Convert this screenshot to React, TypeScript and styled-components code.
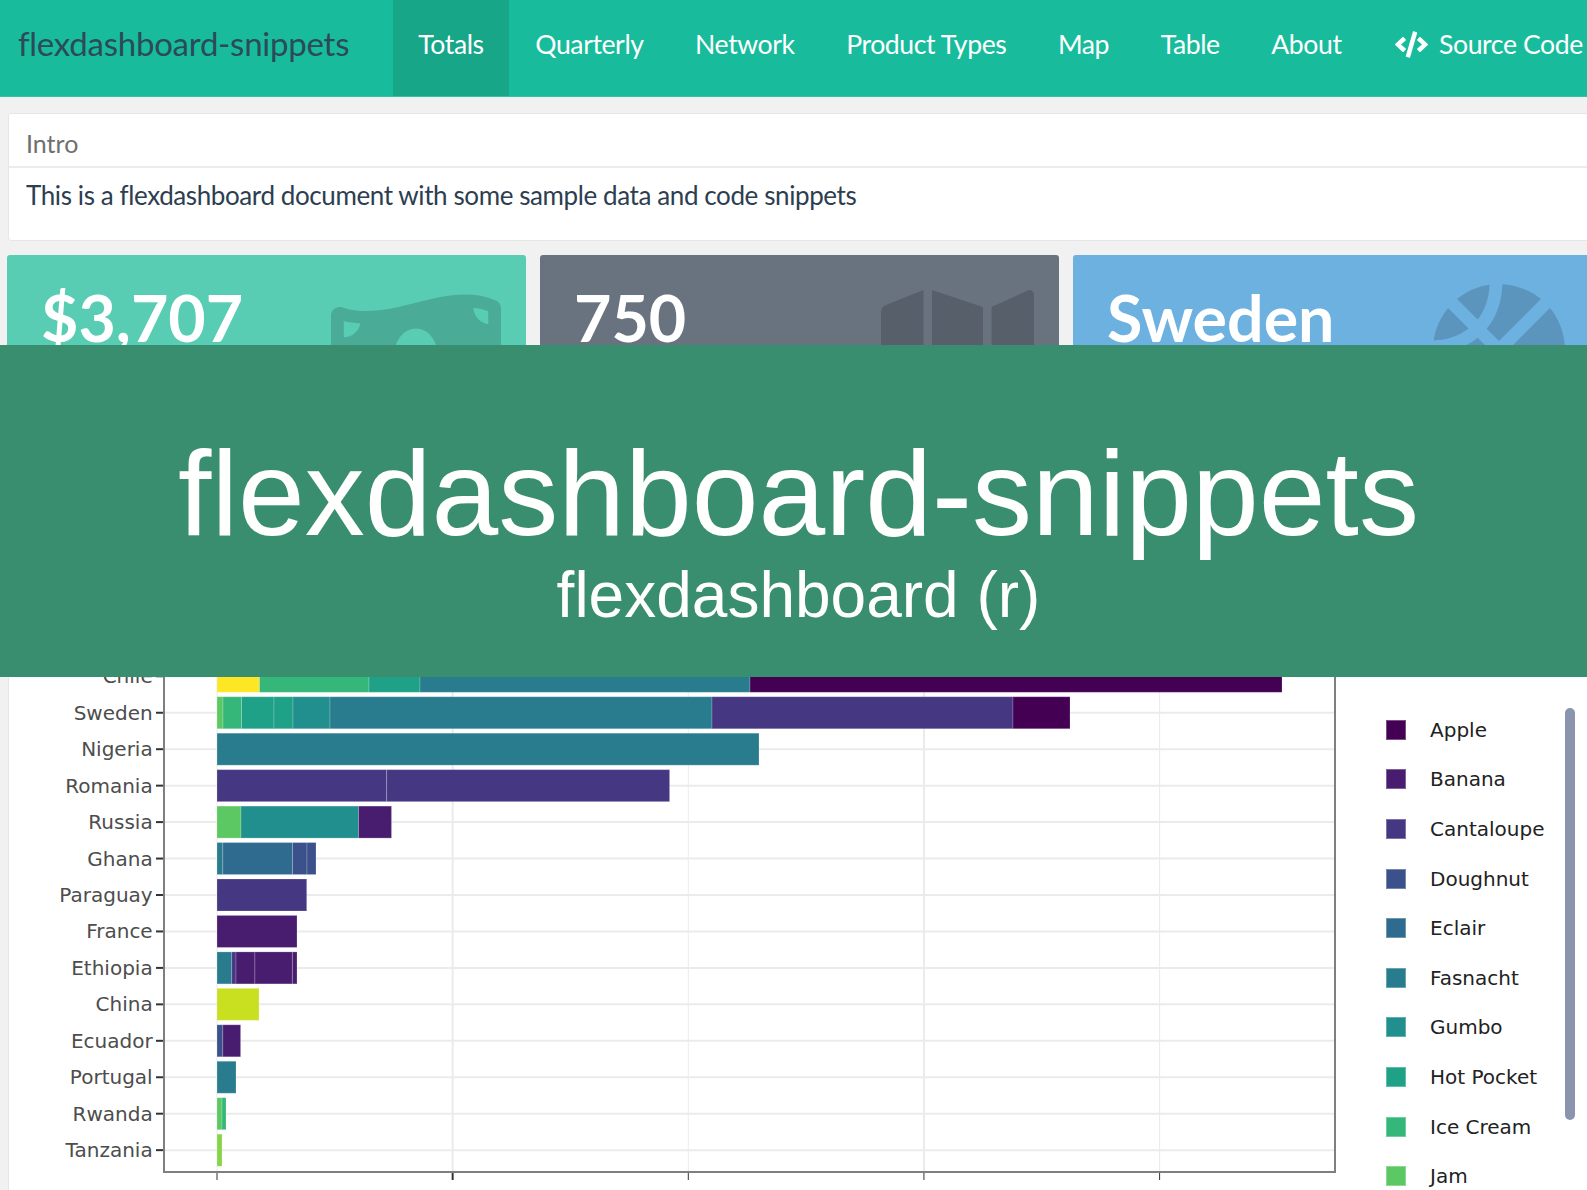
import React from 'react';
import styled, { createGlobalStyle } from 'styled-components';
import { FaBasketballBall, FaCode, FaMap, FaMoneyBillWave } from 'react-icons/fa';

const GlobalStyle = createGlobalStyle`
  html, body {
    margin: 0;
    padding: 0;
    background: #f1f1f1;
  }
  body {
    font-family: 'Lato', sans-serif;
  }
`;

const Page = styled.div`
  position: relative;
  width: 1587px;
  height: 1190px;
  overflow: hidden;
`;

const Navbar = styled.nav`
  display: flex;
  align-items: stretch;
  width: 1640px;
  height: 97px;
  box-sizing: border-box;
  background: #18bc9c;
  border-bottom: 1px solid #2ec4a6;
`;

const Brand = styled.div`
  flex: none;
  display: flex;
  align-items: center;
  width: 393px;
  box-sizing: border-box;
  padding: 0 0 10px 18px;
  font-size: 33px;
  letter-spacing: -0.25px;
  color: #2c4a58;
  white-space: nowrap;
`;

const NavItem = styled.a<{ $active?: boolean }>`
  flex: none;
  display: flex;
  align-items: center;
  gap: 11px;
  padding: 0 25.25px 8px;
  margin-right: 1px;
  font-size: 26.6px;
  letter-spacing: -0.4px;
  color: #fff;
  white-space: nowrap;
  background: ${(p) => (p.$active ? '#17a688' : 'transparent')};
`;

const CodeIcon = styled(FaCode)`
  margin-left: 2px;
`;

const Main = styled.main`
  display: flex;
  flex-direction: column;
  width: 1610px;
  padding: 16px 0 0 7px;
  box-sizing: border-box;
`;

const IntroCard = styled.section`
  height: 128px;
  box-sizing: border-box;
  margin-left: 1px;
  background: #fff;
  border: 1px solid #e6e6e6;
  border-radius: 3px;
`;

const IntroTitle = styled.div`
  height: 54px;
  box-sizing: border-box;
  padding: 14px 0 0 17px;
  font-size: 25px;
  line-height: 30px;
  color: #6f6f6f;
  border-bottom: 2px solid #ececec;
`;

const IntroBody = styled.p`
  margin: 0;
  padding: 11px 0 0 17px;
  font-size: 26px;
  line-height: 32px;
  letter-spacing: -0.4px;
  color: #2c3e50;
`;

const ValueRow = styled.div`
  display: grid;
  grid-template-columns: repeat(3, 519px);
  gap: 14px;
  margin-top: 14px;
`;

const ValueBox = styled.div<{ $bg: string }>`
  position: relative;
  height: 190px;
  overflow: hidden;
  box-sizing: border-box;
  padding: 24px 0 0 34px;
  background: ${(p) => p.$bg};
  border-radius: 3px;
  font-size: 64.5px;
  line-height: 76px;
  font-weight: 700;
  color: #fff;
`;

const BoxIcon = styled.span<{ $top: number }>`
  position: absolute;
  top: ${(p) => p.$top}px;
  right: 25px;
  display: flex;
  color: rgba(0, 0, 0, 0.16);
`;

const ChartCard = styled.section`
  display: flex;
  margin: 15px 0 0 1px;
  height: 760px;
  background: #fff;
  border: 1px solid #e6e6e6;
  border-radius: 3px;
`;

const Plot = styled.svg`
  flex: none;
  width: 1350px;
  height: 760px;
  font-family: 'DejaVu Sans', sans-serif;
`;

const AxisLabel = styled.text`
  font-size: 20px;
  fill: #4d4d4d;
`;

const Legend = styled.ul`
  position: relative;
  list-style: none;
  margin: 0;
  padding: 244px 0 0 27px;
  font-family: 'DejaVu Sans', sans-serif;
`;

const LegendItem = styled.li`
  display: flex;
  align-items: center;
  gap: 24px;
  height: 49.6px;
  font-size: 20px;
  color: #222;
  white-space: nowrap;
`;

const Swatch = styled.span<{ $color: string }>`
  flex: none;
  width: 20px;
  height: 20px;
  box-sizing: border-box;
  background: ${(p) => p.$color};
  border: 1px solid rgba(255, 255, 255, 0.3);
`;

const LegendScroll = styled.div`
  position: absolute;
  top: 247px;
  left: 206px;
  width: 10px;
  height: 412px;
  border-radius: 5px;
  background: #8a94ad;
`;

const Banner = styled.div`
  position: absolute;
  top: 345px;
  left: 0;
  right: 0;
  height: 332px;
  padding: 40px 0 0 10px;
  box-sizing: border-box;
  display: flex;
  flex-direction: column;
  align-items: center;
  justify-content: center;
  background: #388e6e;
  color: #fff;
  font-family: 'Liberation Sans', Arial, sans-serif;
`;

const BannerTitle = styled.div`
  font-size: 120px;
  line-height: 124px;
`;

const BannerSub = styled.div`
  margin-top: 4px;
  font-size: 64px;
  line-height: 72px;
`;

const APPLE = '#440154';
const BANANA = '#481d6f';
const CANTALOUPE = '#453781';
const DOUGHNUT = '#3b518b';
const ECLAIR = '#2f6b8e';
const FASNACHT = '#287c8e';
const GUMBO = '#218f8d';
const HOT = '#1fa187';
const ICE = '#36b77a';
const JAM = '#5cc863';

const legend: [string, string][] = [
  ['Apple', APPLE],
  ['Banana', BANANA],
  ['Cantaloupe', CANTALOUPE],
  ['Doughnut', DOUGHNUT],
  ['Eclair', ECLAIR],
  ['Fasnacht', FASNACHT],
  ['Gumbo', GUMBO],
  ['Hot Pocket', HOT],
  ['Ice Cream', ICE],
  ['Jam', JAM],
];

// each segment: right edge in page px, colour
const rows: { name: string; segs: [number, string][] }[] = [
  { name: 'Chile', segs: [[259.5, '#fde725'], [369, ICE], [420, HOT], [750, FASNACHT], [1282, APPLE]] },
  { name: 'Sweden', segs: [[223, JAM], [241.5, ICE], [274, HOT], [293, HOT], [330, GUMBO], [712, FASNACHT], [1013, CANTALOUPE], [1070, APPLE]] },
  { name: 'Nigeria', segs: [[759, FASNACHT]] },
  { name: 'Romania', segs: [[386.6, CANTALOUPE], [669.6, CANTALOUPE]] },
  { name: 'Russia', segs: [[241, JAM], [358.5, GUMBO], [391.5, BANANA]] },
  { name: 'Ghana', segs: [[222.8, FASNACHT], [292.5, ECLAIR], [307, DOUGHNUT], [316, DOUGHNUT]] },
  { name: 'Paraguay', segs: [[306.7, CANTALOUPE]] },
  { name: 'France', segs: [[297, BANANA]] },
  { name: 'Ethiopia', segs: [[231.7, FASNACHT], [236, CANTALOUPE], [254.9, BANANA], [292.4, BANANA], [297, BANANA]] },
  { name: 'China', segs: [[259, '#c8e020']] },
  { name: 'Ecuador', segs: [[222.8, DOUGHNUT], [240.6, BANANA]] },
  { name: 'Portugal', segs: [[236, FASNACHT]] },
  { name: 'Rwanda', segs: [[222, JAM], [226, ICE]] },
  { name: 'Tanzania', segs: [[222, '#86d549']] },
];

const ROW0 = 676.3;
const ROW_STEP = 36.45;
const BAR_H = 32;
const X0 = 217;
const PX_PER_UNIT = 4.713;

const ticks = [0, 50, 100, 150, 200];

const Chart = () => (
  <Plot viewBox="9 461 1350 760">
    {ticks.map((t) => (
      <line
        key={t}
        x1={X0 + t * PX_PER_UNIT}
        x2={X0 + t * PX_PER_UNIT}
        y1={461}
        y2={1172}
        stroke="#ebebeb"
        strokeWidth={t === 50 || t === 150 ? 2 : 1}
      />
    ))}
    {rows.map((r, i) => {
      const y = ROW0 + i * ROW_STEP;
      let left = X0;
      return (
        <g key={r.name}>
          <line x1={164} x2={1335} y1={y} y2={y} stroke="#ebebeb" strokeWidth={2} />
          <line x1={156} x2={164} y1={y} y2={y} stroke="#333" strokeWidth={2} />
          <AxisLabel x={152.7} y={y + 7} textAnchor="end">
            {r.name}
          </AxisLabel>
          {r.segs.map(([right, color]) => {
            const x = left;
            left = right;
            return (
              <rect
                key={right}
                x={x}
                y={y - BAR_H / 2}
                width={right - x}
                height={BAR_H}
                fill={color}
                stroke="#fff"
                strokeOpacity={0.2}
                strokeWidth={1}
              />
            );
          })}
        </g>
      );
    })}
    <rect x={164} y={461} width={1171} height={711} fill="none" stroke="#7f7f7f" strokeWidth={2} />
    {ticks.map((t) => (
      <g key={t}>
        <line
          x1={X0 + t * PX_PER_UNIT}
          x2={X0 + t * PX_PER_UNIT}
          y1={1173}
          y2={1180}
          stroke="#333"
          strokeWidth={t === 50 ? 2 : 1}
        />
        <AxisLabel x={X0 + t * PX_PER_UNIT} y={1204} textAnchor="middle">
          {t}
        </AxisLabel>
      </g>
    ))}
  </Plot>
);

const navItems = ['Quarterly', 'Network', 'Product Types', 'Map', 'Table', 'About'];

const App = () => (
  <Page>
    <GlobalStyle />
    <Navbar>
      <Brand>flexdashboard-snippets</Brand>
      <NavItem $active>Totals</NavItem>
      {navItems.map((item) => (
        <NavItem key={item}>{item}</NavItem>
      ))}
      <NavItem>
        <CodeIcon size={33} />
        Source Code
      </NavItem>
    </Navbar>
    <Main>
      <IntroCard>
        <IntroTitle>Intro</IntroTitle>
        <IntroBody>This is a flexdashboard document with some sample data and code snippets</IntroBody>
      </IntroCard>
      <ValueRow>
        <ValueBox $bg="#59ccb4">
          $3,707
          <BoxIcon $top={14}>
            <FaMoneyBillWave size={170} />
          </BoxIcon>
        </ValueBox>
        <ValueBox $bg="#68737f">
          750
          <BoxIcon $top={18}>
            <FaMap size={153} />
          </BoxIcon>
        </ValueBox>
        <ValueBox $bg="#6db1e1">
          Sweden
          <BoxIcon $top={27}>
            <FaBasketballBall size={136} />
          </BoxIcon>
        </ValueBox>
      </ValueRow>
      <ChartCard>
        <Chart />
        <Legend>
          {legend.map(([name, color]) => (
            <LegendItem key={name}>
              <Swatch $color={color} />
              {name}
            </LegendItem>
          ))}
          <LegendScroll />
        </Legend>
      </ChartCard>
    </Main>
    <Banner>
      <BannerTitle>flexdashboard-snippets</BannerTitle>
      <BannerSub>flexdashboard (r)</BannerSub>
    </Banner>
  </Page>
);

export default App;
